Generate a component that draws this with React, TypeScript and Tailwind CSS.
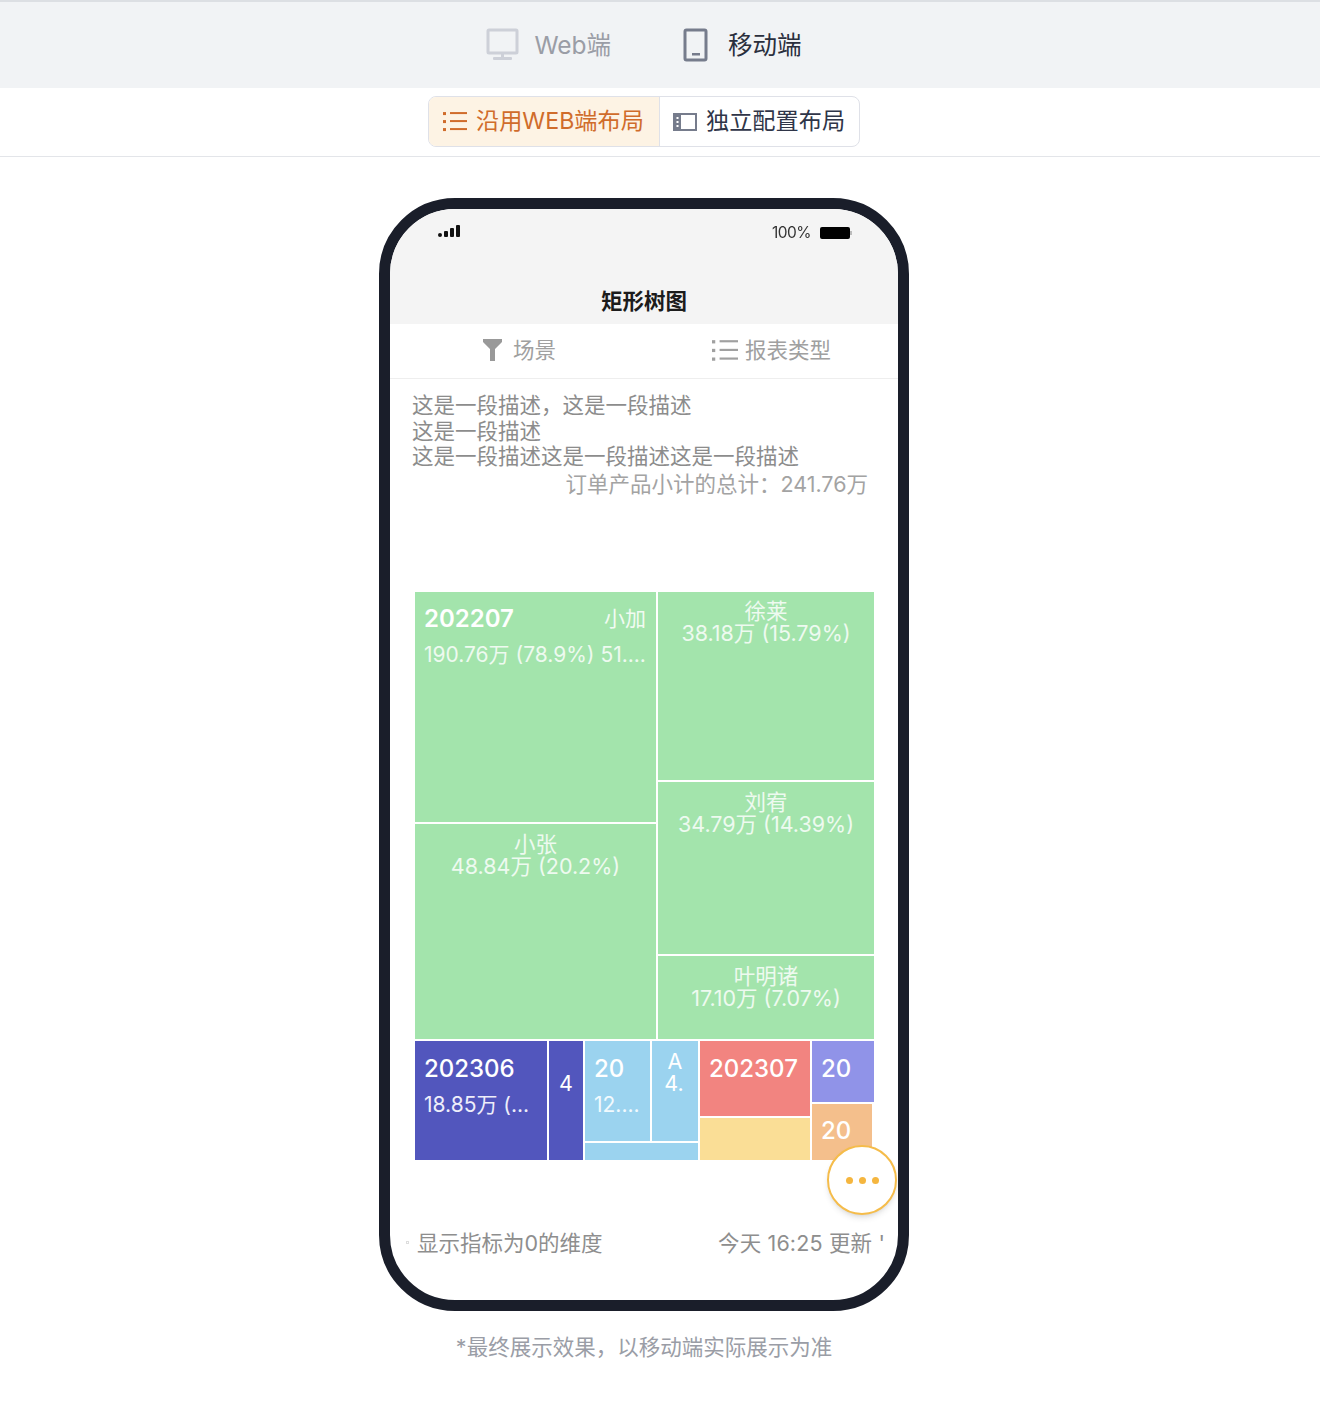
import React from "react";

const Cell = ({ className = "", children }: { className?: string; children?: React.ReactNode }) => (
  <div className={`overflow-hidden text-white ${className}`}>{children}</div>
);

const Centered = ({ a, b, top = "pt-[9px]" }: { a: string; b: string; top?: string }) => (
  <div className={`${top} text-center text-[21.5px] leading-[22px] text-[#eefaf0]`}>
    <div>{a}</div>
    <div>{b}</div>
  </div>
);

const ListIcon = ({ color, w = 24 }: { color: string; w?: number }) => (
  <svg width={w} height={w * 0.84} viewBox="0 0 24 20" fill="none">
    <g fill={color}>
      <rect x="0" y="1" width="3" height="3" />
      <rect x="0" y="9" width="3" height="3" />
      <rect x="0" y="17" width="3" height="3" />
      <rect x="7" y="1" width="17" height="2" />
      <rect x="7" y="9" width="17" height="2" />
      <rect x="7" y="17" width="17" height="2" />
    </g>
  </svg>
);

export default function App() {
  return (
    <div className="h-[1408px] w-[1320px] overflow-hidden bg-white font-['Inter','Noto_Sans_CJK_SC',sans-serif]">
      <div className="flex h-[88px] items-center justify-center gap-[72px] border-t-2 border-[#dcdfe3] bg-[#f1f3f5] pr-[32px]">
        <div className="flex items-center gap-[14px] text-[24.5px] text-[#9a9da6]">
          <svg width="34" height="34" viewBox="0 0 34 34" fill="none">
            <rect x="2" y="2" width="29" height="23" rx="1" stroke="#cdd0d8" strokeWidth="3" />
            <rect x="15" y="25" width="3" height="5" fill="#cdd0d8" />
            <rect x="7" y="29" width="19" height="3" rx="1" fill="#cdd0d8" />
          </svg>
          <span>Web端</span>
        </div>
        <div className="flex items-center gap-[19px] text-[24.5px] text-[#2a2f3d]">
          <svg width="26" height="34" viewBox="0 0 26 34" fill="none">
            <rect x="2" y="2" width="21" height="30" rx="1.5" stroke="#767c8c" strokeWidth="3" />
            <rect x="9" y="25" width="8" height="2.5" fill="#767c8c" />
          </svg>
          <span>移动端</span>
        </div>
      </div>

      <div className="flex h-[69px] justify-center border-b border-[#e3e5e9] pr-[32px] pt-[8px]">
        <div className="flex h-[51px] w-[432px] overflow-hidden rounded-[8px] border border-[#dfe1e8]">
          <div className="flex w-[231px] items-center gap-[9px] border-r border-[#dfe1e8] bg-[#fdf3e4] pl-[14px] text-[23.2px] text-[#d06c2b]">
            <ListIcon color="#d06c2b" />
            <span className="whitespace-nowrap">沿用WEB端布局</span>
          </div>
          <div className="flex flex-1 items-center gap-[9px] pl-[13px] text-[23.2px] text-[#2f3548]">
            <svg width="24" height="20" viewBox="0 0 24 20" fill="none">
              <rect x="1" y="2" width="22" height="16" stroke="#767c8c" strokeWidth="2" />
              <rect x="1" y="2" width="7" height="16" fill="#767c8c" />
              <rect x="3.5" y="5" width="2" height="2" fill="#fff" />
              <rect x="3.5" y="9" width="2" height="2" fill="#fff" />
              <rect x="3.5" y="13" width="2" height="2" fill="#fff" />
            </svg>
            <span className="whitespace-nowrap">独立配置布局</span>
          </div>
        </div>
      </div>

      <div className="ml-[379px] mt-[41px] h-[1113px] w-[530px]">
        <div className="relative h-full overflow-hidden rounded-[76px] border-[11px] border-[#1a1e2a] bg-white">
          <div className="h-[115px] bg-[#f4f4f4]">
            <div className="flex items-start justify-between pl-[48px] pr-[46px] pt-[15px]">
              <svg width="22" height="15" viewBox="0 0 22 15" className="blur-[0.6px]">
                <g fill="#111">
                  <rect x="0" y="9" width="4" height="4" rx="2" />
                  <rect x="6" y="7" width="4" height="6" rx="1" />
                  <rect x="12" y="4" width="4" height="9" rx="1" />
                  <rect x="18" y="1" width="4" height="12" rx="1" />
                </g>
              </svg>
              <div className="flex items-center gap-[9px] blur-[0.6px]">
                <span className="text-[15.5px] leading-[18px] tracking-[-0.5px] text-[#333]">100%</span>
                <div className="flex items-center">
                  <div className="h-[12px] w-[30px] rounded-[2px] bg-black" />
                  <div className="h-[4px] w-[2px] bg-[#bbbbbb]" />
                </div>
              </div>
            </div>
            <div className="mt-[44px] text-center text-[21.5px] font-bold leading-[30px] text-[#1c1c1c]">矩形树图</div>
          </div>

          <div className="flex h-[55px] border-b border-[#eeeeee] text-[21.5px] text-[#a0a0a0]">
            <div className="flex w-[254px] items-center justify-end gap-[10px] pb-[2px] pr-[88px]">
              <svg width="20" height="22" viewBox="0 0 20 22">
                <path d="M0 0H19V3L12 10V22H7V10L0 3Z" fill="#999" />
              </svg>
              <span>场景</span>
            </div>
            <div className="flex flex-1 items-center justify-end gap-[7px] pb-[2px] pr-[67px]">
              <ListIcon color="#a0a0a0" w={26} />
              <span>报表类型</span>
            </div>
          </div>

          <div className="px-[22px] pt-[14px] text-[21.5px] leading-[25.7px] text-[#8c8c8c]">
            <div>这是一段描述，这是一段描述</div>
            <div>这是一段描述</div>
            <div>这是一段描述这是一段描述这是一段描述</div>
            <div className="mt-[2px] pr-[8px] text-right text-[#a3a3a3]">订单产品小计的总计：241.76万</div>
          </div>

          <div className="ml-[25px] mt-[94px] flex h-[568px] w-[459px] flex-col gap-[2px]">
            <div className="flex h-[447px] gap-[2px]">
              <div className="flex w-[241px] flex-col gap-[2px]">
                <Cell className="h-[230px] bg-[#a3e4ac] pl-[9px] pr-[10px] pt-[9px]">
                  <div className="flex items-center justify-between">
                    <span className="text-[24px] font-semibold leading-[36px]">202207</span>
                    <span className="text-[21px] text-[#f1fbf2]">小加</span>
                  </div>
                  <div className="mt-[4px] whitespace-nowrap text-[21px] leading-[28px] text-[#eefaf0]">190.76万 (78.9%) 51....</div>
                </Cell>
                <Cell className="flex-1 bg-[#a3e4ac]"><Centered a="小张" b="48.84万 (20.2%)" /></Cell>
              </div>
              <div className="flex flex-1 flex-col gap-[2px]">
                <Cell className="h-[188px] bg-[#a3e4ac]"><Centered a="徐莱" b="38.18万 (15.79%)" top="pt-[8px]" /></Cell>
                <Cell className="h-[172px] bg-[#a3e4ac]"><Centered a="刘宥" b="34.79万 (14.39%)" /></Cell>
                <Cell className="flex-1 bg-[#a3e4ac]"><Centered a="叶明诸" b="17.10万 (7.07%)" /></Cell>
              </div>
            </div>
            <div className="flex h-[119px] gap-[2px]">
              <Cell className="w-[132px] bg-[#5256bd] pl-[9px] pt-[10px]">
                <div className="text-[24px] font-medium leading-[36px]">202306</div>
                <div className="whitespace-nowrap text-[21px] leading-[36px] text-[#eeeefa]">18.85万 (...</div>
              </Cell>
              <Cell className="w-[34px] bg-[#5256bd] pt-[27px] text-center text-[21.5px] leading-[30px] text-[#eeeefa]">4</Cell>
              <div className="flex w-[113px] flex-col gap-[2px]">
                <div className="flex h-[100px] gap-[2px]">
                  <Cell className="w-[65px] bg-[#9bd3ef] pl-[9px] pt-[10px]">
                    <div className="text-[24px] font-medium leading-[36px]">20</div>
                    <div className="whitespace-nowrap text-[21px] leading-[36px] text-[#f2fafe]">12....</div>
                  </Cell>
                  <Cell className="flex-1 bg-[#9bd3ef] pt-[9px] text-center text-[21.5px] leading-[22px] text-[#f2fafe]">
                    <div>A</div>
                    <div className="pr-[2px]">4.</div>
                  </Cell>
                </div>
                <Cell className="flex-1 bg-[#9bd3ef]" />
              </div>
              <div className="flex w-[110px] flex-col gap-[2px]">
                <Cell className="h-[75px] bg-[#f28480] pl-[9px] pt-[10px] text-[24px] font-medium leading-[36px]">202307</Cell>
                <Cell className="flex-1 bg-[#fade96]" />
              </div>
              <div className="flex flex-1 flex-col gap-[2px]">
                <Cell className="h-[61px] bg-[#9093e8] pl-[9px] pt-[10px] text-[24px] font-medium leading-[36px]">20</Cell>
                <Cell className="mr-[2px] flex-1 bg-[#f4bf8c] pl-[9px] pt-[9px] text-[24px] font-medium leading-[36px]">20</Cell>
              </div>
            </div>
          </div>

          <div className="mt-[67px] flex items-center justify-between whitespace-nowrap pl-[16px] pr-[13px] text-[21.5px] leading-[32px] text-[#8e8e8e]">
            <div className="flex items-center gap-[8px]">
              <span className="h-[3px] w-[3px] border border-[#dddddd]" />
              <span>显示指标为0的维度</span>
            </div>
            <span className="tracking-[0.15px]">今天 16:25 更新 '</span>
          </div>

          <div className="absolute left-[437px] top-[936px] flex h-[70px] w-[70px] items-center justify-center gap-[6px] rounded-full border-2 border-[#f5bc4a] bg-white shadow-md">
            <span className="h-[7px] w-[7px] rounded-full bg-[#f5b63f]" />
            <span className="h-[7px] w-[7px] rounded-full bg-[#f5b63f]" />
            <span className="h-[7px] w-[7px] rounded-full bg-[#f5b63f]" />
          </div>
        </div>
      </div>

      <div className="ml-[-32px] mt-[21px] text-center text-[21.5px] leading-[30px] text-[#9a9da6]">*最终展示效果，以移动端实际展示为准</div>
    </div>
  );
}
